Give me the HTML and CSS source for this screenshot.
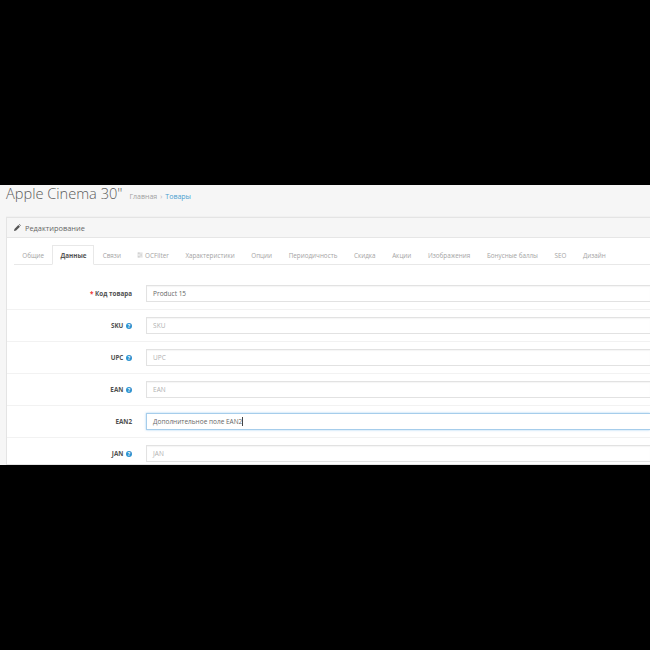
FILE: index.html
```html
<!DOCTYPE html>
<html lang="ru">
<head>
<meta charset="utf-8">
<title>Apple Cinema 30"</title>
<link rel="stylesheet" href="styles.css">
</head>
<body>
<main class="shot">
  <header class="page-head">
    <h1>Apple Cinema 30"</h1>
    <span class="crumb">Главная</span>
    <span class="crumb-sep">›</span>
    <span class="crumb-link">Товары</span>
  </header>
  <section class="panel">
    <div class="panel-head">
      <svg class="pencil" viewBox="0 0 12 12"><path d="M0 12l.8-3.600L7.400 1.800l2.800 2.800L3.600 11.200z M8.400.8l.8-.8 2.800 2.800-.8.8z"/></svg>
      <span>Редактирование</span>
    </div>
    <div class="panel-body">
      <nav class="tabs">
        <a class="tab">Общие</a>
        <a class="tab active">Данные</a>
        <a class="tab">Связи</a>
        <a class="tab"><svg class="filter" viewBox="0 0 8 8"><path d="M.5 1.500h7M.5 4h7M.5 6.500h7M2.500.5v2M5.500 3v2M2.500 5.500v2"/></svg> OCFilter</a>
        <a class="tab">Характеристики</a>
        <a class="tab">Опции</a>
        <a class="tab">Периодичность</a>
        <a class="tab">Скидка</a>
        <a class="tab">Акции</a>
        <a class="tab">Изображения</a>
        <a class="tab">Бонусные баллы</a>
        <a class="tab">SEO</a>
        <a class="tab">Дизайн</a>
      </nav>
      <form class="form">
        <div class="row">
          <label class="label"><span class="req">*</span> Код товара</label>
          <div class="input value">Product 15</div>
        </div>
        <div class="row">
          <label class="label">SKU <span class="help">?</span></label>
          <div class="input">SKU</div>
        </div>
        <div class="row">
          <label class="label">UPC <span class="help">?</span></label>
          <div class="input">UPC</div>
        </div>
        <div class="row">
          <label class="label">EAN <span class="help">?</span></label>
          <div class="input">EAN</div>
        </div>
        <div class="row">
          <label class="label">EAN2</label>
          <div class="input value focus">Дополнительное поле EAN2<span class="caret"></span></div>
        </div>
        <div class="row">
          <label class="label">JAN <span class="help">?</span></label>
          <div class="input">JAN</div>
        </div>
      </form>
    </div>
  </section>
</main>
</body>
</html>
```

FILE: styles.css
```css
* { box-sizing: border-box; }
html, body { margin: 0; height: 100%; }
body {
  background: #000;
  padding-top: 185px;
  overflow: hidden;
  font-family: "Open Sans", sans-serif;
}
.shot {
  width: 650px;
  height: 280px;
  background: #f6f6f6;
  padding-left: 6px;
}
.page-head {
  height: 32px;
  display: flex;
  align-items: baseline;
  white-space: nowrap;
  border-bottom: 1px solid #f1f1f1;
}
.page-head h1 {
  margin: 0 7px 0 0;
  font-size: 14.600px;
  line-height: 16px;
  font-weight: 300;
  color: #5a5a5a;
}
.crumb { font-size: 7px; color: #a0a0a0; }
.crumb-sep { font-size: 7px; color: #b5b5b5; margin: 0 3px; }
.crumb-link { font-size: 7px; color: #4a9fd0; }
.panel {
  width: 644px;
  height: 248px;
  overflow: hidden;
  border: 1px solid #e4e4e4;
  border-right: 0;
  background: #fff;
}
.panel-head {
  height: 20px;
  background: #f6f6f6;
  border-bottom: 1px solid #e6e6e6;
  display: flex;
  align-items: center;
  gap: 4px;
  padding-left: 7px;
  font-size: 7.400px;
  color: #666;
}
.pencil { width: 7px; height: 7px; fill: #555; }
.panel-body { padding: 7px 0 0 7px; }
.tabs {
  height: 20px;
  display: flex;
  border-bottom: 1px solid #e8e8e8;
  white-space: nowrap;
}
.tab {
  height: 20px;
  padding: 0 8.300px;
  font-size: 6.300px;
  line-height: 21px;
  color: #a4a4a4;
  display: block;
}
.tab.active {
  padding: 0 7px;
  background: #fff;
  border: 1px solid #e8e8e8;
  border-bottom-color: #fff;
  font-weight: 700;
  color: #555;
  line-height: 19px;
}
.filter { width: 6px; height: 6px; stroke: #b4b4b4; stroke-width: .8; fill: none; }
.form { margin-left: -7px; }
.row {
  height: 32px;
  display: flex;
  align-items: center;
  border-bottom: 1px solid #f2f2f2;
}
.form .row:first-child { height: 45px; padding-top: 13px; }
.label {
  width: 125px;
  margin-right: 13.600px;
  flex: none;
  text-align: right;
  font-size: 6.300px;
  font-weight: 700;
  color: #4f4f4f;
  white-space: nowrap;
}
.req { color: #f03030; }
.help {
  display: inline-block;
  width: 6px;
  height: 6px;
  margin-left: 1px;
  border-radius: 50%;
  background: #2f93d0;
  color: #fff;
  font-size: 5px;
  line-height: 6px;
  text-align: center;
}
.input {
  flex: 1;
  height: 17px;
  padding-left: 6.500px;
  border: 1px solid #e2e2e2;
  border-right: 0;
  box-shadow: inset 0 1px 1px rgba(0,0,0,.04);
  background: #fff;
  font-size: 6.500px;
  line-height: 15px;
  color: #b0b0b0;
}
.input.value { color: #666; }
.input.focus {
  border-color: #a6cdeb;
  box-shadow: 0 0 2px rgba(102,175,233,.6);
}
.caret {
  display: inline-block;
  width: 1px;
  height: 9px;
  background: #444;
  vertical-align: -2px;
}
```
